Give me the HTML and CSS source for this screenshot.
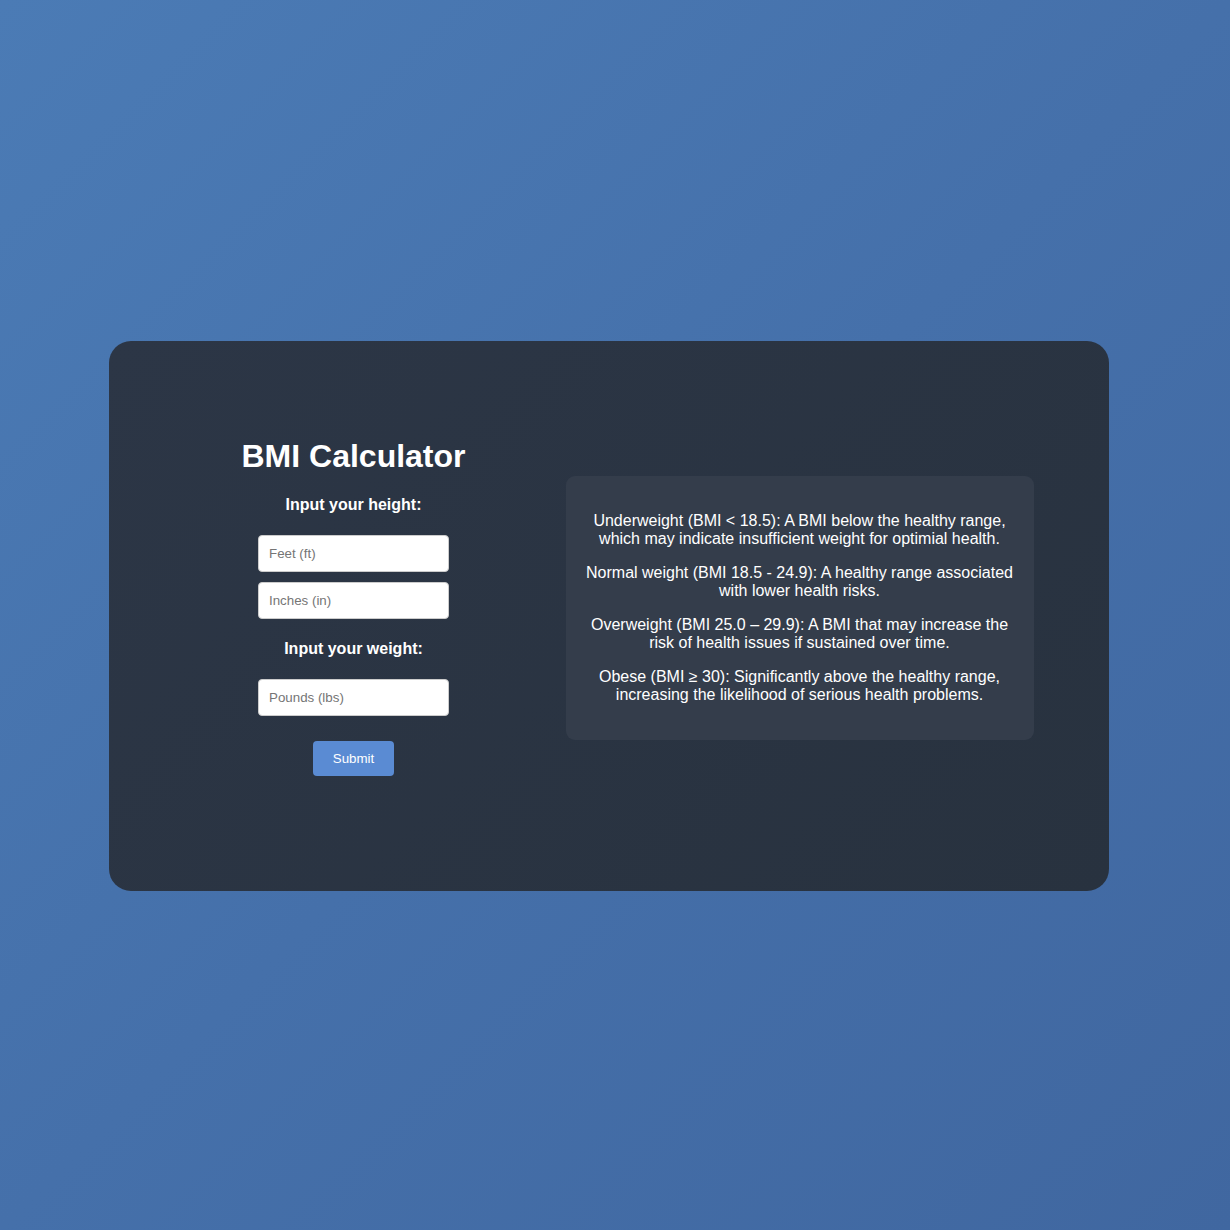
FILE: index.html
```html
<!DOCTYPE html>
<html lang="en">
<head>
<meta charset="utf-8">
<title>BMI Calculator</title>
<link rel="stylesheet" href="styles.css">
</head>
<body>
<main class="card">
  <section class="calc">
    <h1 class="title">BMI Calculator</h1>
    <h3 class="label">Input your height:</h3>
    <input class="field" type="text" placeholder="Feet (ft)">
    <input class="field field-gap" type="text" placeholder="Inches (in)">
    <h3 class="label label-weight">Input your weight:</h3>
    <input class="field" type="text" placeholder="Pounds (lbs)">
    <button class="submit" type="button">Submit</button>
  </section>
  <section class="info">
    <p>Underweight (BMI &lt; 18.5): A BMI below the healthy range, which may indicate insufficient weight for optimial health.</p>
    <p>Normal weight (BMI 18.5 - 24.9): A healthy range associated with lower health risks.</p>
    <p>Overweight (BMI 25.0 – 29.9): A BMI that may increase the risk of health issues if sustained over time.</p>
    <p>Obese (BMI ≥ 30): Significantly above the healthy range, increasing the likelihood of serious health problems.</p>
  </section>
</main>
</body>
</html>
```

FILE: styles.css
```css
html, body {
  margin: 0;
  height: 100%;
}

body {
  min-height: 100vh;
  display: flex;
  align-items: center;
  justify-content: center;
  padding: 2px 13px 0 0;
  box-sizing: border-box;
  background: linear-gradient(135deg, #4b7bb5 0%, #4570aa 50%, #4067a0 100%);
  font-family: "Liberation Sans", Arial, sans-serif;
  color: #ffffff;
}

.card {
  width: 1000px;
  height: 550px;
  box-sizing: border-box;
  border-radius: 22px;
  background: linear-gradient(135deg, #2c3646 0%, #28323f 100%);
  display: flex;
  align-items: center;
  padding: 0 74px 18px 95px;
  gap: 62px;
}

.calc {
  width: 300px;
  display: flex;
  flex-direction: column;
  align-items: center;
}

.title {
  margin: 0;
  font-size: 32px;
  line-height: 37px;
  font-weight: bold;
}

.label {
  margin: 21px 0 21px;
  font-size: 16px;
  line-height: 18px;
  font-weight: bold;
}

.label-weight {
  margin-top: 21px;
}

.field {
  width: 191px;
  height: 37px;
  box-sizing: border-box;
  padding: 10px;
  border: 1px solid #cccccc;
  border-radius: 4px;
  background: #ffffff;
  font-family: "Liberation Sans", Arial, sans-serif;
  font-size: 13.333px;
  color: #333333;
  outline: none;
}

.field::placeholder {
  color: #757575;
}

.field-gap {
  margin-top: 10px;
}

.submit {
  margin-top: 25px;
  width: 81px;
  height: 35px;
  border: none;
  border-radius: 4px;
  background: #5a8bd3;
  color: #ffffff;
  font-family: "Liberation Sans", Arial, sans-serif;
  font-size: 13.333px;
  padding: 0;
  cursor: pointer;
}

.info {
  width: 468px;
  box-sizing: border-box;
  margin-top: 2px;
  padding: 20px;
  border-radius: 9px;
  background: #343d4b;
  text-align: center;
  font-size: 16px;
  line-height: 18px;
}

.info p {
  margin: 16px 0;
}
```
